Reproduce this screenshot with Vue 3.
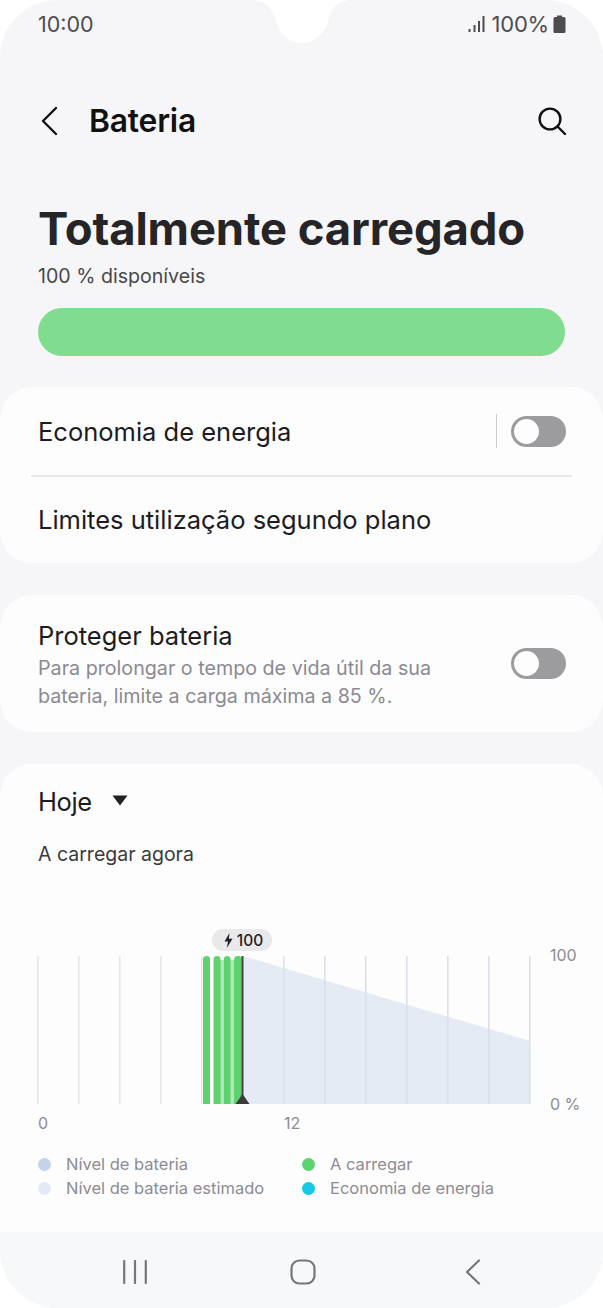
<template>
  <div class="screen">
    <svg class="notch" width="603" height="44" viewBox="0 0 603 44">
      <path d="M250 0C268 0 273 10 276 22C280 35 290 43 302 43C314 43 324 35 328 22C331 10 336 0 352 0Z" fill="#fff" />
    </svg>

    <div class="status">
      <span>10:00</span>
      <div class="status-right">
        <svg width="17" height="18" viewBox="0 0 17 18">
          <path d="M1.5 14v3M6.5 10v7M11 6v11M15.5 1v16" stroke="#4d4d50" stroke-width="2" fill="none" />
        </svg>
        <span class="pct">100%</span>
        <svg width="13" height="18" viewBox="0 0 13 18">
          <path d="M4 0.5h5v1.5h2a1.5 1.5 0 0 1 1.5 1.5v13a1.5 1.5 0 0 1-1.5 1.5H2A1.5 1.5 0 0 1 .5 16V3.5A1.5 1.5 0 0 1 2 2h2z" fill="#4d4d50" />
        </svg>
      </div>
    </div>

    <div class="header">
      <svg class="back" width="18" height="30" viewBox="0 0 18 30">
        <path d="M16 2L3 15L16 28" stroke="#111" stroke-width="2.4" fill="none" stroke-linecap="round" stroke-linejoin="round" />
      </svg>
      <h1>Bateria</h1>
      <svg class="search" width="30" height="30" viewBox="0 0 30 30">
        <circle cx="13" cy="13" r="10.4" stroke="#111" stroke-width="2.4" fill="none" />
        <path d="M20.5 20.5L28 28" stroke="#111" stroke-width="2.4" stroke-linecap="round" />
      </svg>
    </div>

    <div class="hero">
      <h2>Totalmente carregado</h2>
      <p>100 % disponíveis</p>
      <div class="bar"></div>
    </div>

    <section class="card first">
      <div class="row">
        <span class="label nudge">Economia de energia</span>
        <div class="row-end">
          <i class="vline"></i>
          <div class="toggle"><i></i></div>
        </div>
      </div>
      <div class="divider"></div>
      <div class="row short">
        <span class="label">Limites utilização segundo plano</span>
      </div>
    </section>

    <section class="card second">
      <div class="second-text">
        <div class="label">Proteger bateria</div>
        <div class="desc">Para prolongar o tempo de vida útil da sua<br />bateria, limite a carga máxima a 85 %.</div>
      </div>
      <div class="toggle"><i></i></div>
    </section>

    <section class="card usage">
      <div class="today">
        <span class="label">Hoje</span>
        <svg width="16" height="11" viewBox="0 0 16 11"><path d="M0.5 0.5H15.5L8 10.5Z" fill="#222" /></svg>
      </div>
      <div class="now">A carregar agora</div>

      <div class="pill-wrap">
        <div class="pill">
          <svg width="9" height="15" viewBox="0 0 9 15"><path d="M5.5 0L0.5 8.5H4L2.8 15L8.5 5.8H4.8Z" fill="#222" /></svg>
          <span>100</span>
        </div>
      </div>

      <div class="chart-row">
        <svg class="plot" width="492" height="148" viewBox="0 0 492 148">
          <polygon points="205,0 492,85 492,148 205,148" fill="#e5ebf5" />
          <line v-for="x in gridX" :key="x" :x1="x" :x2="x" y1="0" y2="148" :stroke="x > 205 ? '#dcdfe7' : '#e6e6e9'" stroke-width="1.5" />
          <rect x="182" y="4" width="5" height="144" fill="#ade8b7" />
          <rect x="192" y="4" width="5" height="144" fill="#ade8b7" />
          <path v-for="b in bars" :key="b.x" :d="barPath(b.x, b.w)" fill="#5dd26f" />
          <line x1="204.5" x2="204.5" y1="0" y2="148" stroke="#47474a" stroke-width="2" />
          <polygon points="204.5,138 211.5,148 197.5,148" fill="#3b3b3e" />
        </svg>
        <div class="y-axis">
          <span>100</span>
          <span>0 %</span>
        </div>
      </div>

      <div class="x-axis">
        <span>0</span>
        <span>12</span>
      </div>

      <div class="legend">
        <div v-for="item in legend" :key="item.text" class="legend-item">
          <i :style="{ background: item.color }"></i>
          <span>{{ item.text }}</span>
        </div>
      </div>
    </section>

    <div class="nav">
      <svg width="24" height="24" viewBox="0 0 24 24">
        <path d="M1.2 1v22M12 1v22M22.8 1v22" stroke="#77777a" stroke-width="2.2" stroke-linecap="round" />
      </svg>
      <svg class="nav-home" width="26" height="26" viewBox="0 0 26 26">
        <rect x="1.5" y="1.5" width="23" height="23" rx="8" stroke="#77777a" stroke-width="2.2" fill="none" />
      </svg>
      <svg class="nav-back" width="16" height="26" viewBox="0 0 16 26">
        <path d="M14 1.5L2 13L14 24.5" stroke="#77777a" stroke-width="2.2" fill="none" stroke-linecap="round" stroke-linejoin="round" />
      </svg>
    </div>
  </div>
</template>

<script setup>
const gridX = [0, 41, 82, 123, 164, 246, 287, 328, 369, 410, 451, 492].map((x) => x - 0.2)

const bars = [
  { x: 165, w: 7 },
  { x: 175.5, w: 7 },
  { x: 186, w: 6.5 },
  { x: 196, w: 8 }
]

const legend = [
  { text: 'Nível de bateria', color: '#c4d3e9' },
  { text: 'A carregar', color: '#5dd26f' },
  { text: 'Nível de bateria estimado', color: '#e4eaf5' },
  { text: 'Economia de energia', color: '#14c8e6' }
]

function barPath(x, w) {
  const r = w / 2
  return `M${x} 148V${r}a${r} ${r} 0 0 1 ${w} 0V148Z`
}
</script>

<style scoped>
.screen {
  position: relative;
  width: 603px;
  height: 1308px;
  overflow: hidden;
  border-radius: 58px;
  background: #f6f6f8;
  font-family: Inter, "Noto Sans", sans-serif;
  color: #1c1c1e;
}
.notch {
  position: absolute;
  top: 0;
  left: 0;
}
.status {
  display: flex;
  justify-content: space-between;
  align-items: center;
  height: 48px;
  padding: 0 37px 0 38px;
  font-size: 21.5px;
  color: #4d4d50;
}
.status-right {
  display: flex;
  align-items: center;
  gap: 4px;
}
.pct {
  font-size: 22px;
  letter-spacing: -0.2px;
  margin-left: 2px;
}
.header {
  display: flex;
  align-items: center;
  height: 50px;
  margin-top: 48px;
  padding: 0 36px 0 40px;
}
.header h1 {
  flex: 1;
  margin: -2px 0 0 31px;
  font-size: 31.8px;
  font-weight: 600;
  letter-spacing: -0.2px;
  color: #111;
}
.hero {
  padding: 0 38px;
  margin-top: 57px;
}
.hero h2 {
  margin: 0;
  font-size: 45.4px;
  line-height: 52px;
  font-weight: 700;
  letter-spacing: -0.1px;
  color: #252528;
}
.hero p {
  margin: 8px 0 0;
  font-size: 19.6px;
  line-height: 26px;
  color: #48484b;
}
.bar {
  height: 48px;
  width: 527px;
  margin-top: 19px;
  border-radius: 24px;
  background: #80dd90;
}
.card {
  background: #fdfdfe;
  border-radius: 32px;
}
.first {
  margin-top: 31px;
  height: 176px;
}
.row {
  display: flex;
  align-items: center;
  justify-content: space-between;
  height: 88px;
  padding: 0 37px 0 38px;
}
.row.short {
  height: 86px;
}
.label {
  font-size: 25.5px;
  line-height: 32px;
  color: #1c1c1e;
}
.nudge {
  margin-top: 2px;
}
.row-end {
  display: flex;
  align-items: center;
  gap: 14px;
}
.vline {
  width: 1px;
  height: 34px;
  background: #cfcfd2;
}
.divider {
  height: 2px;
  margin: 0 31px;
  background: #e8e8ea;
}
.toggle {
  display: flex;
  align-items: center;
  width: 55px;
  height: 31px;
  padding: 0 3px;
  box-sizing: border-box;
  border-radius: 16px;
  background: #9c9c9f;
}
.toggle i {
  width: 25px;
  height: 25px;
  border-radius: 50%;
  background: #fdfdfe;
}
.second {
  display: flex;
  align-items: center;
  justify-content: space-between;
  height: 137px;
  margin-top: 32px;
  padding: 0 37px 0 38px;
  box-sizing: border-box;
}
.second-text {
  padding-top: 3px;
}
.desc {
  margin-top: 2px;
  font-size: 19.7px;
  line-height: 28px;
  color: #8a8a90;
}
.usage {
  height: 468px;
  margin-top: 32px;
  padding: 22px 0 0 38px;
  box-sizing: border-box;
  border-radius: 32px 32px 0 0;
}
.today {
  display: flex;
  align-items: center;
  gap: 20px;
}
.today .label {
  letter-spacing: -0.4px;
}
.today svg {
  margin-bottom: 4px;
}
.now {
  margin-top: 23px;
  font-size: 19.5px;
  line-height: 26px;
  color: #3a3a3d;
}
.pill-wrap {
  margin-top: 62px;
  padding-left: 174px;
}
.pill {
  display: flex;
  align-items: center;
  justify-content: center;
  gap: 4px;
  width: 60px;
  height: 22px;
  padding-left: 3px;
  box-sizing: border-box;
  border-radius: 11px;
  background: #e9e9eb;
  font-size: 15.5px;
  font-weight: 500;
  color: #222;
}
.chart-row {
  display: flex;
  margin-top: 5px;
}
.plot {
  display: block;
  flex: none;
  overflow: visible;
}
.y-axis {
  display: flex;
  flex-direction: column;
  justify-content: space-between;
  height: 167px;
  margin: -10px 0 0 20px;
  font-size: 16px;
  line-height: 18px;
  color: #8c8c92;
}
.x-axis {
  display: grid;
  grid-template-columns: 246px auto;
  font-size: 16px;
  line-height: 20px;
  color: #8c8c92;
}
.legend {
  display: grid;
  grid-template-columns: 264px auto;
  row-gap: 4px;
  margin-top: 21px;
}
.legend-item {
  display: flex;
  align-items: center;
  gap: 15px;
  font-size: 16.5px;
  line-height: 20px;
  color: #8c8c92;
}
.legend-item i {
  width: 13px;
  height: 13px;
  border-radius: 50%;
}
.nav {
  display: flex;
  align-items: center;
  height: 76px;
  padding: 4px 0 0 123px;
  box-sizing: border-box;
  background: #f7f8f9;
}
.nav-home {
  margin-left: 143px;
}
.nav-back {
  margin-left: 149px;
}
</style>

<style>
body {
  background: #fff;
}
</style>
